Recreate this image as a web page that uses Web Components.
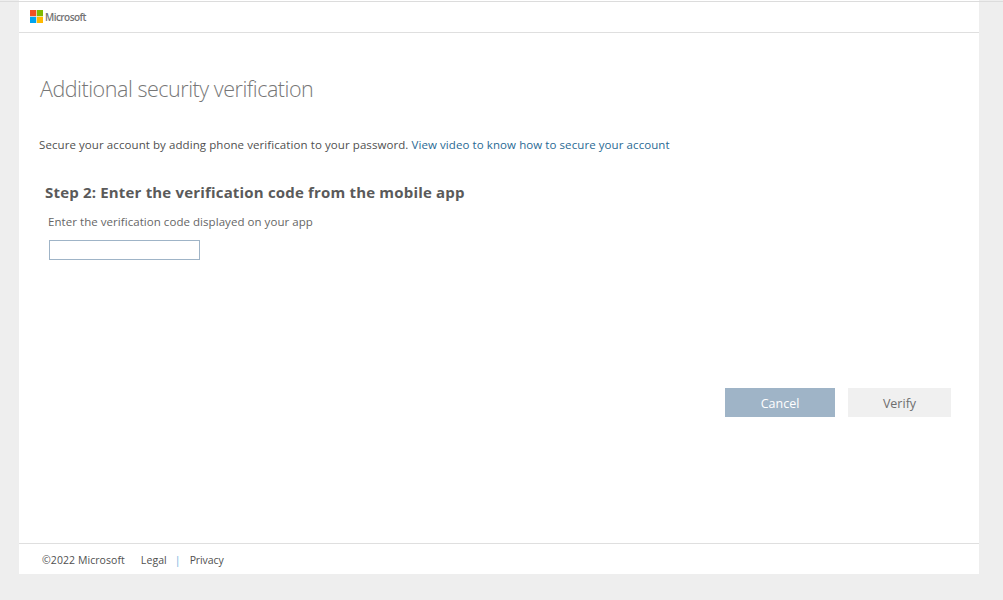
<!DOCTYPE html>
<html lang="en">
<head>
<meta charset="utf-8">
<title>Additional security verification</title>
<style>
  html, body { margin: 0; height: 100%; background: #eeeeee; }
  body { font-family: "Open Sans", "Noto Sans", sans-serif; overflow: hidden; }
</style>
</head>
<body>
<mfa-page>
  <mfa-header slot="header"></mfa-header>
  <h-title slot="main">Additional security verification</h-title>
  <mfa-intro slot="main"></mfa-intro>
  <mfa-step slot="main"></mfa-step>
  <mfa-actions slot="main"></mfa-actions>
  <mfa-footer slot="footer"></mfa-footer>
</mfa-page>

<script>
// page shell: white column on grey background
class MfaPage extends HTMLElement {
  constructor() {
    super();
    this.attachShadow({ mode: "open" });
    this.shadowRoot.innerHTML = `
      <style>
        :host { display: block; width: 960px; height: 574px; margin-left: 19px; background: #fff; }
        .wrap { display: flex; flex-direction: column; height: 100%; }
        main { flex: 1; padding: 0 28px 0 20px; }
      </style>
      <div class="wrap">
        <slot name="header"></slot>
        <main><slot name="main"></slot></main>
        <slot name="footer"></slot>
      </div>
    `;
  }
}

class MfaHeader extends HTMLElement {
  constructor() {
    super();
    this.attachShadow({ mode: "open" });
    this.shadowRoot.innerHTML = `
      <style>
        :host { display: flex; align-items: center; box-sizing: border-box; height: 33px; padding: 0 0 0 10.5px;
                background: #fff; }
        .top { position: absolute; left: 0; right: 0; top: 1px; height: 1px; background: #dcdcdc; }
        .bottom { position: absolute; left: 19px; width: 960px; top: 32px; height: 1px; background: #dfdfdf; }
        svg { display: block; margin-right: 2.5px; }
        span { font: 600 10px "Open Sans", sans-serif; letter-spacing: -0.55px; color: #737373; }
      </style>
      <div class="top"></div>
      <div class="bottom"></div>
      <svg width="13" height="13" viewBox="0 0 13 13">
        <rect width="6.2" height="6.2" fill="#f25022"/>
        <rect x="6.8" width="6.2" height="6.2" fill="#7fba00"/>
        <rect y="6.8" width="6.2" height="6.2" fill="#00a4ef"/>
        <rect x="6.8" y="6.8" width="6.2" height="6.2" fill="#ffb900"/>
      </svg>
      <span>Microsoft</span>
    `;
  }
}

class HTitle extends HTMLElement {
  constructor() {
    super();
    this.attachShadow({ mode: "open" });
    this.shadowRoot.innerHTML = `
      <style>
        :host { display: block; padding: 41px 0 0 1px; font: 300 21.5px/30px "Open Sans", sans-serif; letter-spacing: -0.47px; color: #777; }
      </style>
      <slot></slot>
    `;
  }
}

class MfaIntro extends HTMLElement {
  constructor() {
    super();
    this.attachShadow({ mode: "open" });
    this.shadowRoot.innerHTML = `
      <style>
        :host { display: block; margin-top: 33px; font: 11.5px/16px "Open Sans", sans-serif; color: #505050; letter-spacing: 0.08px; white-space: nowrap; }
        a { color: #2a6a94; text-decoration: none; }
      </style>
      Secure your account by adding phone verification to your password. <a href="#">View video to know how to secure your account</a>
    `;
  }
}

class MfaStep extends HTMLElement {
  constructor() {
    super();
    this.attachShadow({ mode: "open" });
    this.shadowRoot.innerHTML = `
      <style>
        :host { display: block; margin-top: 29px; padding-left: 6px; }
        h2 { margin: 0; font: 700 15px/20px "Open Sans", sans-serif; letter-spacing: 0.18px; color: #5a5a5a; white-space: nowrap; }
        p { margin: 12px 0 0 3px; font: 11.5px/16px "Open Sans", sans-serif; letter-spacing: 0.05px; color: #666; }
        input { display: block; box-sizing: border-box; width: 151px; height: 20px; margin: 10px 0 0 4px;
                border: 1px solid #9fb4c7; padding: 0 4px; background: #fff; outline: none; }
      </style>
      <h2>Step 2: Enter the verification code from the mobile app</h2>
      <p>Enter the verification code displayed on your app</p>
      <input type="text" aria-label="Verification code">
    `;
  }
}

class MfaActions extends HTMLElement {
  constructor() {
    super();
    this.attachShadow({ mode: "open" });
    this.shadowRoot.innerHTML = `
      <style>
        :host { display: flex; justify-content: flex-end; gap: 13px; margin-top: 128px; }
        button { box-sizing: border-box; height: 29px; border: 0; padding: 2px 0 0; font: 12.5px "Open Sans", sans-serif; }
        .cancel { width: 110px; background: #9fb4c7; color: #fff; }
        .verify { width: 103px; background: #f0f0f0; color: #6e6e6e; }
      </style>
      <button class="cancel">Cancel</button>
      <button class="verify">Verify</button>
    `;
  }
}

class MfaFooter extends HTMLElement {
  constructor() {
    super();
    this.attachShadow({ mode: "open" });
    this.shadowRoot.innerHTML = `
      <style>
        :host { display: flex; align-items: center; box-sizing: border-box; height: 31px; padding: 2px 0 0 23px;
                border-top: 1px solid #dfdfdf; font: 10.5px "Open Sans", sans-serif; letter-spacing: 0.07px; color: #505050; white-space: nowrap; }
        a { color: inherit; text-decoration: none; }
        .legal { margin-left: 16px; }
        .sep { margin: 0 9px 0 8px; color: #6fb2e0; }
        .priv { letter-spacing: -0.1px; }
      </style>
      <span>©2022 Microsoft</span>
      <a class="legal" href="#">Legal</a>
      <span class="sep">|</span>
      <a class="priv" href="#">Privacy</a>
    `;
  }
}

customElements.define("mfa-page", MfaPage);
customElements.define("mfa-header", MfaHeader);
customElements.define("h-title", HTitle);
customElements.define("mfa-intro", MfaIntro);
customElements.define("mfa-step", MfaStep);
customElements.define("mfa-actions", MfaActions);
customElements.define("mfa-footer", MfaFooter);
</script>
</body>
</html>
